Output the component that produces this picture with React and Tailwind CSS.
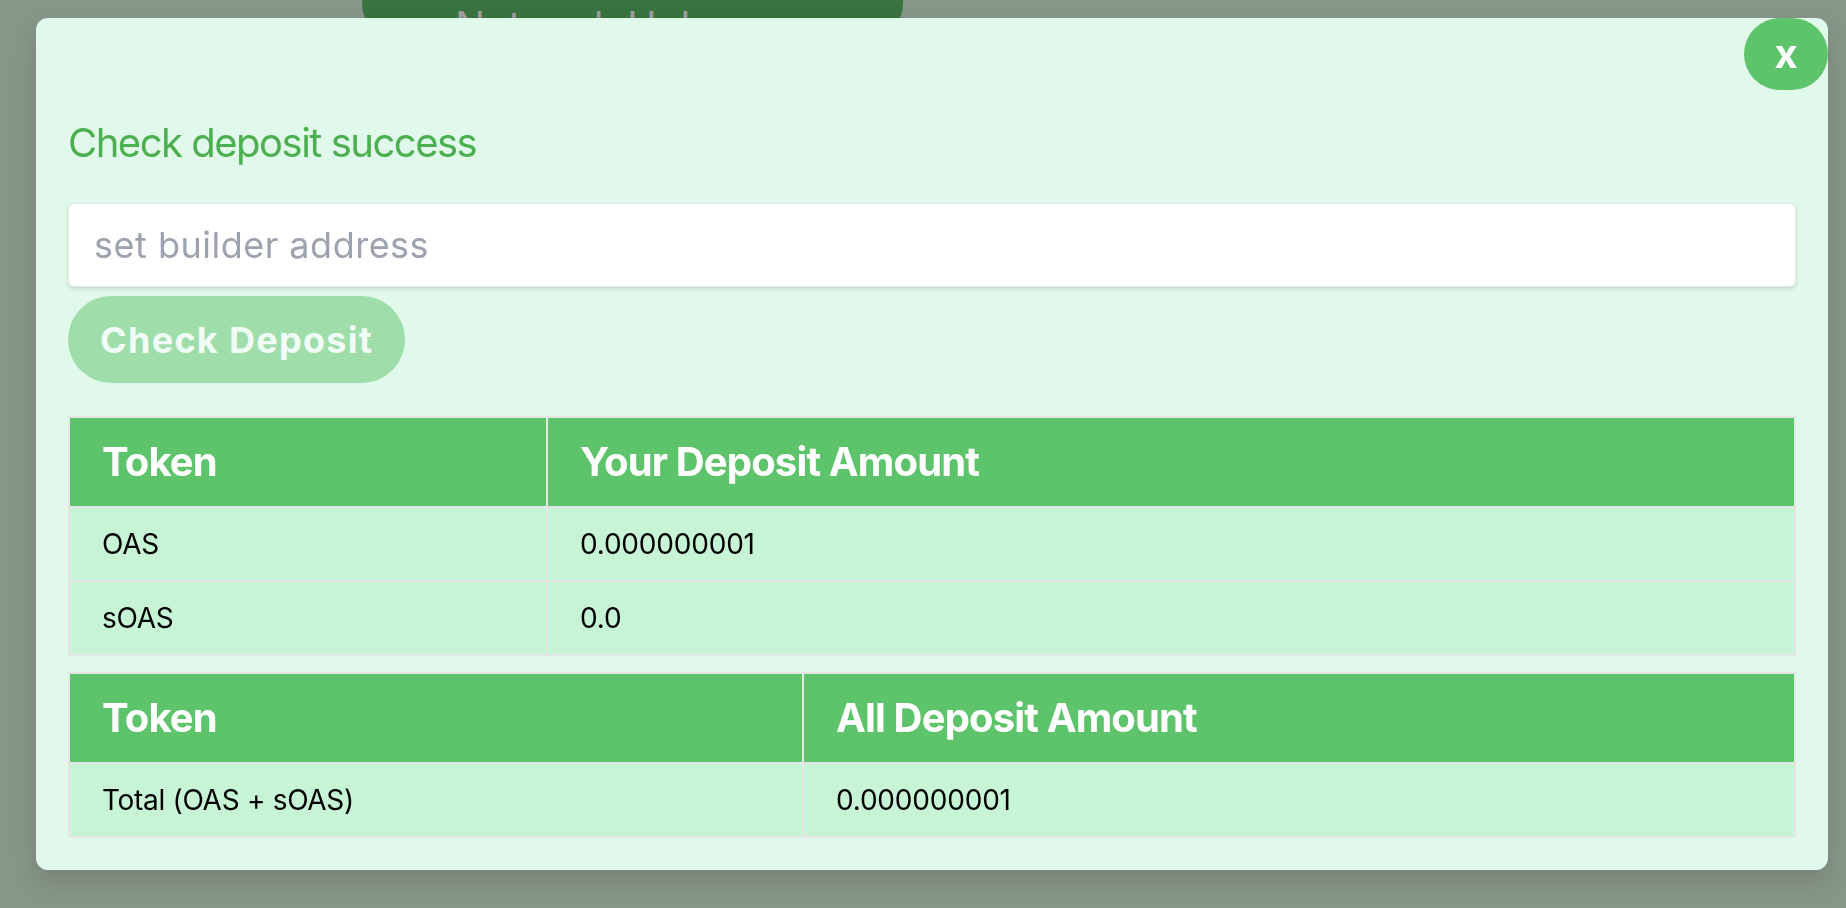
const yourDeposits = [
  { token: "OAS", amount: "0.000000001" },
  { token: "sOAS", amount: "0.0" },
]

const allDeposits = [{ token: "Total (OAS + sOAS)", amount: "0.000000001" }]

function DepositTable({ title, rows, firstCol }) {
  return (
    <table className="w-full table-fixed border-collapse border-2 border-[#e4e6e8]">
      <thead>
        <tr className="bg-[#5ec46b] text-white">
          <th
            className={`${firstCol} border-2 border-[#e4e6e8] px-[32px] py-[16px] text-left text-[40px] leading-[56px] font-bold tracking-[-0.85px]`}
          >
            Token
          </th>
          <th className="border-2 border-[#e4e6e8] px-[32px] py-[16px] text-left text-[40px] leading-[56px] font-bold tracking-[-0.85px]">
            {title}
          </th>
        </tr>
      </thead>
      <tbody>
        {rows.map((r) => (
          <tr key={r.token} className="bg-[#c6f4d5] text-black">
            <td className="border-2 border-[#e4e6e8] px-[32px] py-[16px] text-[28px] leading-[40px] tracking-[-0.3px]">
              {r.token}
            </td>
            <td className="border-2 border-[#e4e6e8] px-[32px] py-[16px] text-[28px] leading-[40px] tracking-[-0.2px]">
              {r.amount}
            </td>
          </tr>
        ))}
      </tbody>
    </table>
  )
}

export default function App() {
  return (
    <div className="relative h-screen overflow-hidden bg-[#869688] font-[family-name:Inter,'Liberation_Sans',sans-serif]">
      {/* page behind the modal */}
      <div className="ml-[362px] -mt-[37px] h-[80px] w-[541px] rounded-[40px] bg-[#387440] pl-[93px] pt-[43px] text-[40px] leading-none text-[#9e9e9e]">
        Network Hub
      </div>

      <div className="fixed inset-0 pl-[36px] pr-[18px] pt-[18px]">
        <div className="rounded-[12px] bg-[#e1f9ea] px-[32px] pb-[32px] shadow-[0_12px_28px_rgba(0,0,0,0.12)]">
          <div className="-mr-[32px] flex justify-end">
            <button className="h-[72px] w-[84px] rounded-full bg-[#5ec46b] text-[40px] leading-none font-bold text-white">
              x
            </button>
          </div>

          <h2 className="mt-[25px] text-[40px] leading-[56px] tracking-[-1.5px] text-[#4caf50]">
            Check deposit success
          </h2>

          <input
            placeholder="set builder address"
            className="mt-[32px] block h-[84px] w-full rounded-[6px] border border-[#e3e6e9] bg-white px-[25px] text-[36px] tracking-[0.5px] text-gray-800 shadow-[0_2px_4px_rgba(0,0,0,0.12)] outline-none placeholder:text-[#9ca3af]"
          />

          <button
            disabled
            className="mt-[9px] h-[87px] rounded-full bg-[#5ec46b] px-[32px] text-[36px] font-bold tracking-[1.3px] text-white opacity-50"
          >
            Check Deposit
          </button>

          <div className="mt-[33px]">
            <DepositTable
              title="Your Deposit Amount"
              rows={yourDeposits}
              firstCol="w-[478px]"
            />
          </div>

          <div className="mt-[16px]">
            <DepositTable
              title="All Deposit Amount"
              rows={allDeposits}
              firstCol="w-[734px]"
            />
          </div>
        </div>
      </div>
    </div>
  )
}
